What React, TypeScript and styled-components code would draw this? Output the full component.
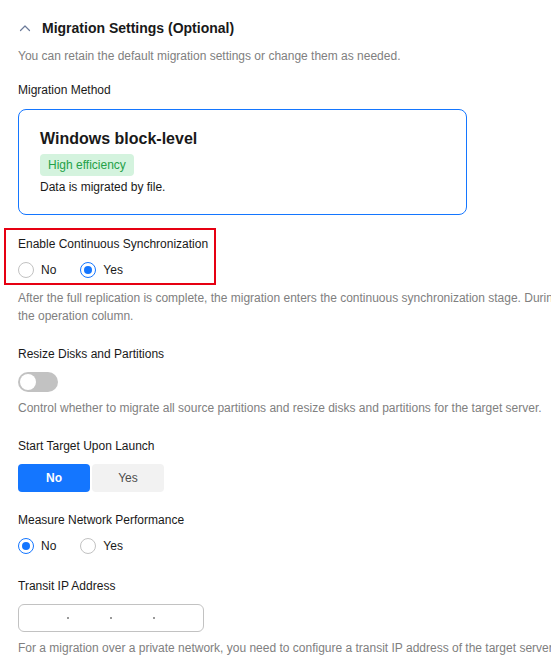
import React, { useState } from "react";
import styled, { createGlobalStyle } from "styled-components";

const Global = createGlobalStyle`
  html, body { margin: 0; padding: 0; background: #ffffff; overflow: hidden; }
  body { font-family: "Liberation Sans", Arial, sans-serif; color: #191919; }
`;

const Page = styled.div`
  width: 760px;
  padding: 17px 0 0 18px;
  box-sizing: border-box;
  font-size: 12px;
`;

const Header = styled.div`
  display: flex;
  align-items: center;
  height: 22px;
  gap: 11px;
  margin-left: 1px;
`;

const Title = styled.h2`
  margin: 0;
  font-size: 14px;
  font-weight: 700;
  line-height: 22px;
  color: #191919;
`;

const Hint = styled.p<{ $mt?: number }>`
  margin: ${(p) => p.$mt ?? 7}px 0 0;
  font-size: 12px;
  line-height: 18px;
  color: #808080;
`;

const Label = styled.div<{ $mt?: number }>`
  margin-top: ${(p) => p.$mt ?? 20}px;
  font-size: 12px;
  line-height: 18px;
  color: #191919;
`;

const Card = styled.div`
  margin-top: 10px;
  width: 449px;
  box-sizing: border-box;
  border: 1px solid #1476ff;
  border-radius: 8px;
  padding: 18px 21px 18px;
`;

const CardTitle = styled.div`
  font-size: 16px;
  font-weight: 700;
  line-height: 22px;
  color: #191919;
`;

const Badge = styled.span`
  display: inline-block;
  margin-top: 4px;
  height: 22px;
  line-height: 22px;
  padding: 0 8px;
  border-radius: 4px;
  background: #d4f3de;
  color: #24a148;
  font-size: 12px;
`;

const CardText = styled.div`
  margin-top: 2px;
  line-height: 18px;
  font-size: 12px;
`;

const Highlight = styled.div`
  margin-top: 13px;
  margin-left: -14px;
  width: 212px;
  height: 57px;
  box-sizing: border-box;
  border: 2px solid #e60012;
  padding: 5px 0 0 12px;
`;

const RadioRow = styled.div<{ $mt?: number }>`
  margin-top: ${(p) => p.$mt ?? 7}px;
  display: flex;
  align-items: center;
  gap: 24px;
  height: 20px;
`;

const RadioOption = styled.label`
  display: flex;
  align-items: center;
  gap: 7px;
  font-size: 12px;
  color: #191919;
  cursor: pointer;
`;

const RadioCircle = styled.span<{ $checked: boolean }>`
  width: 16px;
  height: 16px;
  box-sizing: border-box;
  border-radius: 50%;
  border: 1px solid ${(p) => (p.$checked ? "#1476ff" : "#c2c2c2")};
  display: flex;
  align-items: center;
  justify-content: center;
  background: #fff;
  &::after {
    content: "";
    width: 8px;
    height: 8px;
    border-radius: 50%;
    background: ${(p) => (p.$checked ? "#1476ff" : "transparent")};
  }
`;

const Toggle = styled.button<{ $on: boolean }>`
  margin-top: 9px;
  display: block;
  width: 40px;
  height: 20px;
  border: none;
  padding: 0;
  border-radius: 10px;
  background: ${(p) => (p.$on ? "#1476ff" : "#c2c2c2")};
  position: relative;
  cursor: pointer;
  &::after {
    content: "";
    position: absolute;
    top: 2px;
    left: ${(p) => (p.$on ? "22px" : "2px")};
    width: 16px;
    height: 16px;
    border-radius: 50%;
    background: #fff;
  }
`;

const Segmented = styled.div`
  margin-top: 9px;
  display: flex;
  gap: 2px;
`;

const SegButton = styled.button<{ $active: boolean }>`
  width: 72px;
  height: 28px;
  border: none;
  border-radius: 4px;
  font-family: inherit;
  font-size: 12px;
  font-weight: ${(p) => (p.$active ? 700 : 400)};
  background: ${(p) => (p.$active ? "#1476ff" : "#f2f2f2")};
  color: ${(p) => (p.$active ? "#ffffff" : "#4d4d4d")};
  cursor: pointer;
`;

const IpBox = styled.div`
  margin-top: 9px;
  width: 186px;
  height: 28px;
  box-sizing: border-box;
  border: 1px solid #c2c2c2;
  border-radius: 6px;
  display: flex;
  align-items: center;
  padding: 0 8px;
`;

const IpSegment = styled.input`
  width: 40px;
  height: 20px;
  border: none;
  outline: none;
  padding: 0;
  text-align: center;
  font-family: inherit;
  font-size: 12px;
  background: transparent;
`;

const IpDot = styled.span`
  width: 3px;
  display: flex;
  justify-content: center;
  &::after {
    content: "";
    width: 2px;
    height: 2px;
    background: #9a9a9a;
  }
`;

const Chevron = () => (
  <svg width="12" height="8" viewBox="0 0 12 8" fill="none">
    <path d="M1.5 6.5 L6 2 L10.5 6.5" stroke="#6b7a99" strokeWidth="1.2" strokeLinecap="round" strokeLinejoin="round" />
  </svg>
);

type RadioProps = { options: string[]; value: string; onChange: (v: string) => void; mt?: number };

const RadioGroup = ({ options, value, onChange, mt }: RadioProps) => (
  <RadioRow $mt={mt}>
    {options.map((o) => (
      <RadioOption key={o} onClick={() => onChange(o)}>
        <RadioCircle $checked={value === o} />
        {o}
      </RadioOption>
    ))}
  </RadioRow>
);

export default function App() {
  const [sync, setSync] = useState("Yes");
  const [resize, setResize] = useState(false);
  const [start, setStart] = useState("No");
  const [measure, setMeasure] = useState("No");

  return (
    <Page>
      <Global />
      <Header>
        <Chevron />
        <Title>Migration Settings (Optional)</Title>
      </Header>
      <Hint $mt={8}>You can retain the default migration settings or change them as needed.</Hint>

      <Label $mt={16}>Migration Method</Label>
      <Card>
        <CardTitle>Windows block-level</CardTitle>
        <Badge>High efficiency</Badge>
        <CardText>Data is migrated by file.</CardText>
      </Card>

      <Highlight>
        <Label $mt={0}>Enable Continuous Synchronization</Label>
        <RadioGroup options={["No", "Yes"]} value={sync} onChange={setSync} />
      </Highlight>
      <Hint $mt={4}>
        After the full replication is complete, the migration enters the continuous synchronization stage. During this stage, you can click Sync in
        <br />
        the operation column.
      </Hint>

      <Label>Resize Disks and Partitions</Label>
      <Toggle $on={resize} onClick={() => setResize(!resize)} />
      <Hint>Control whether to migrate all source partitions and resize disks and partitions for the target server.</Hint>

      <Label>Start Target Upon Launch</Label>
      <Segmented>
        {["No", "Yes"].map((o) => (
          <SegButton key={o} $active={start === o} onClick={() => setStart(o)}>
            {o}
          </SegButton>
        ))}
      </Segmented>

      <Label $mt={19}>Measure Network Performance</Label>
      <RadioGroup options={["No", "Yes"]} value={measure} onChange={setMeasure} />

      <Label $mt={21}>Transit IP Address</Label>
      <IpBox>
        <IpSegment />
        <IpDot />
        <IpSegment />
        <IpDot />
        <IpSegment />
        <IpDot />
        <IpSegment />
      </IpBox>
      <Hint>For a migration over a private network, you need to configure a transit IP address of the target server.</Hint>
    </Page>
  );
}
